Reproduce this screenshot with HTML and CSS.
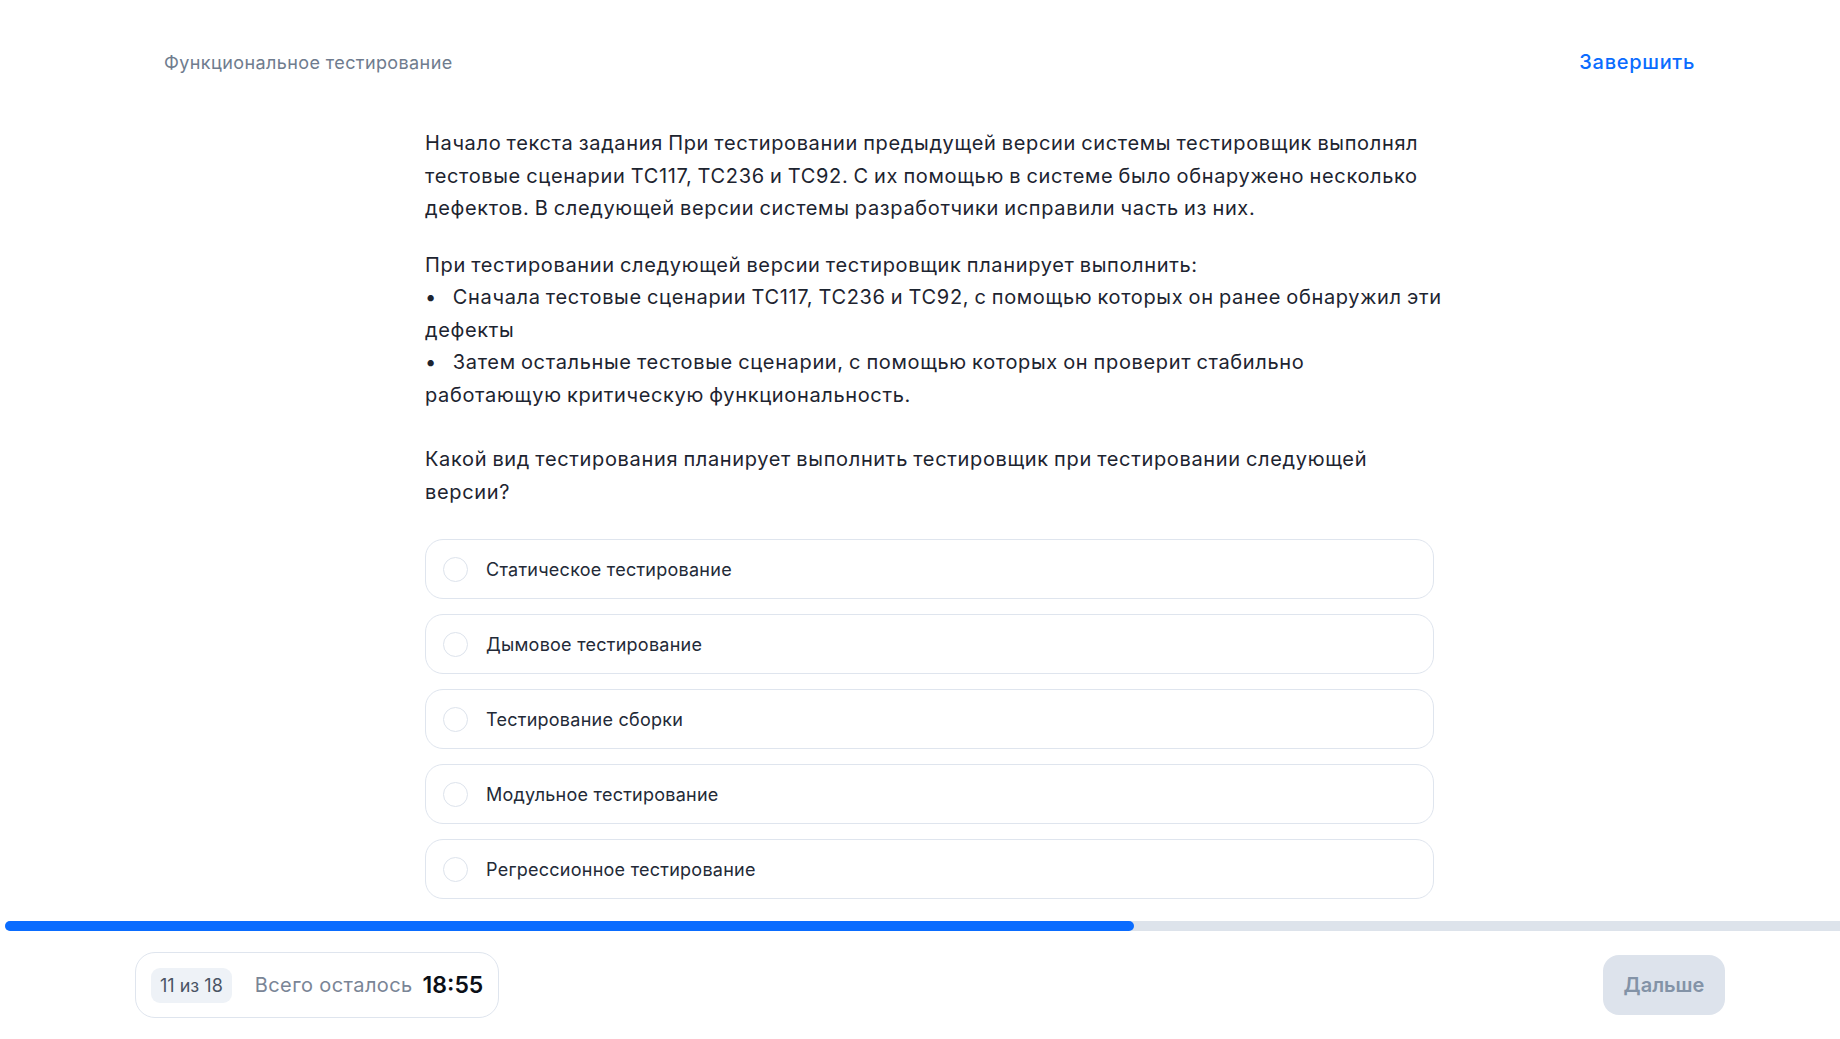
FILE: index.html
```html
<!DOCTYPE html>
<html lang="ru">
<head>
<meta charset="utf-8">
<title>Функциональное тестирование</title>
<link rel="stylesheet" href="styles.css">
</head>
<body>
<div class="page">
  <header class="header">
    <div class="crumb">Функциональное тестирование</div>
    <a class="finish" href="#">Завершить</a>
  </header>

  <main class="task">
    <div class="text">
      <p class="para">Начало текста задания При тестировании предыдущей версии системы тестировщик выполнял тестовые сценарии TC117, TC236 и TC92. С их помощью в системе было обнаружено несколько дефектов. В следующей версии системы разработчики исправили часть из них.</p>
      <p class="para">При тестировании следующей версии тестировщик планирует выполнить:<br>•&nbsp;&ensp;Сначала тестовые сценарии TC117, TC236 и TC92, с помощью которых он ранее обнаружил эти дефекты<br>•&nbsp;&ensp;Затем остальные тестовые сценарии, с помощью которых он проверит стабильно работающую критическую функциональность.</p>
      <p class="para question">Какой вид тестирования планирует выполнить тестировщик при тестировании следующей версии?</p>
    </div>

    <div class="options">
      <label class="option"><span class="radio"></span><span class="opt-text">Статическое тестирование</span></label>
      <label class="option"><span class="radio"></span><span class="opt-text">Дымовое тестирование</span></label>
      <label class="option"><span class="radio"></span><span class="opt-text">Тестирование сборки</span></label>
      <label class="option"><span class="radio"></span><span class="opt-text">Модульное тестирование</span></label>
      <label class="option"><span class="radio"></span><span class="opt-text">Регрессионное тестирование</span></label>
    </div>
  </main>

  <div class="progress"><div class="progress-fill" style="width: 1129px"></div></div>

  <footer class="footer">
    <div class="status">
      <span class="counter">11 из 18</span>
      <span class="left-label">Всего осталось</span>
      <span class="timer">18:55</span>
    </div>
    <button class="next" type="button">Дальше</button>
  </footer>
</div>
</body>
</html>
```

FILE: styles.css
```css
* { box-sizing: border-box; }

html, body {
  margin: 0;
  padding: 0;
  background: #ffffff;
}

body {
  font-family: Inter, "Noto Sans", "Liberation Sans", sans-serif;
  color: #1f2633;
  width: 1840px;
  height: 1039px;
  overflow: hidden;
}

.page {
  display: flex;
  flex-direction: column;
  height: 1039px;
}

.header {
  display: flex;
  justify-content: space-between;
  align-items: center;
  padding: 48px 145px 0 164px;
  height: 76px;
}

.crumb {
  font-size: 18px;
  letter-spacing: 0.4px;
  color: #6f7c8e;
}

.finish {
  font-size: 20px;
  font-weight: 500;
  letter-spacing: 0.7px;
  color: #0a6cff;
  text-decoration: none;
}

.task {
  width: 1009px;
  margin-left: 425px;
  padding-top: 51px;
}

.text {
  width: 1019px;
}

.para {
  margin: 0;
  font-size: 20px;
  line-height: 32.5px;
  letter-spacing: 0.65px;
  word-spacing: -1px;
  color: #1d2430;
}

.para + .para { margin-top: 24px; }
.para.question { margin-top: 32px; }

.options {
  display: flex;
  flex-direction: column;
  gap: 15px;
  margin-top: 31px;
}

.option {
  display: flex;
  align-items: center;
  height: 60px;
  border: 1px solid #dfe5ee;
  border-radius: 18px;
  padding-left: 17px;
  cursor: pointer;
}

.radio {
  width: 25px;
  height: 25px;
  border: 1px solid #dde3ec;
  border-radius: 50%;
  flex: none;
}

.opt-text {
  margin-left: 18px;
  font-size: 18px;
  letter-spacing: 0.25px;
  color: #232a37;
}

.progress {
  margin-top: 22px;
  margin-left: 5px;
  height: 10px;
  background: #dde3eb;
  border-radius: 5px 0 0 5px;
}

.progress-fill {
  height: 10px;
  background: #0a6cff;
  border-radius: 5px;
}

.footer {
  display: flex;
  justify-content: space-between;
  align-items: center;
  padding: 21px 115px 0 135px;
}

.status {
  display: flex;
  align-items: center;
  height: 66px;
  border: 1px solid #dfe5ee;
  border-radius: 20px;
  padding: 0 15px 0 15px;
}

.counter {
  background: #eef2f7;
  border-radius: 9px;
  font-size: 18px;
  color: #4a5464;
  padding: 7px 9px;
  line-height: 21px;
}

.left-label {
  margin-left: 23px;
  font-size: 20px;
  letter-spacing: 0.4px;
  color: #7a8596;
}

.timer {
  margin-left: 10px;
  font-size: 23px;
  font-weight: 600;
  color: #0b0f17;
}

.next {
  width: 122px;
  height: 60px;
  border: none;
  border-radius: 16px;
  background: #dde3ec;
  color: #8393a7;
  font-family: inherit;
  font-size: 20px;
  font-weight: 600;
  cursor: default;
}
```
